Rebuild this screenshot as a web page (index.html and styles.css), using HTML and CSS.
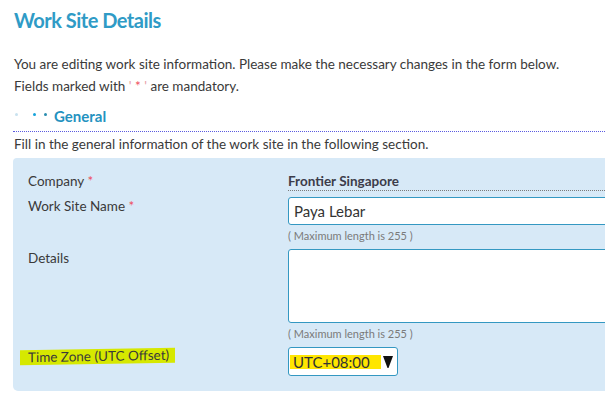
FILE: index.html
```html
<!DOCTYPE html>
<html lang="en">
<head>
  <meta charset="UTF-8">
  <title>Work Site Details</title>
  <link rel="stylesheet" href="styles.css">
</head>
<body>
  <div class="page">
    <h1>Work Site Details</h1>
    <p class="intro">You are editing work site information. Please make the necessary changes in the form below.<br>
      Fields marked with <span class="quote">'</span> <span class="req">*</span> <span class="quote">'</span> are mandatory.</p>

    <div class="section-head">
      <span class="dot dot-light"></span>
      <span class="dot dot-blue"></span>
      <span class="dot dot-dark"></span>
      <span class="section-title">General</span>
    </div>
    <p class="section-desc">Fill in the general information of the work site in the following section.</p>

    <div class="panel">
      <div class="form-grid">
        <div class="label">Company <span class="req">*</span></div>
        <div class="value">
          <div class="readonly">Frontier Singapore</div>
        </div>

        <div class="label">Work Site Name <span class="req">*</span></div>
        <div class="value">
          <input type="text" class="field" value="Paya Lebar">
          <div class="hint">( Maximum length is 255 )</div>
        </div>

        <div class="label">Details</div>
        <div class="value">
          <textarea class="field area"></textarea>
          <div class="hint">( Maximum length is 255 )</div>
        </div>

        <div class="label"><span class="marker">Time Zone (UTC Offset)</span></div>
        <div class="value">
          <div class="select-box">
            <span class="select-text">UTC+08:00</span>
            <svg class="arrow" width="10" height="12" viewBox="0 0 10 12">
              <polygon points="0,0 10,0 5.5,12 4.5,12" fill="#111"/>
            </svg>
          </div>
        </div>
      </div>
    </div>
  </div>
</body>
</html>
```

FILE: styles.css
```css
body {
  margin: 0;
  font-family: Lato, "Open Sans", sans-serif;
  color: #3a3a3a;
  background: #fff;
  overflow: hidden;
}

.page {
  width: 760px;
  padding: 4px 0 0 13px;
}

h1 {
  margin: 0 0 0 1px;
  font-size: 20px;
  font-weight: bold;
  letter-spacing: -0.5px;
  color: #2f9bc6;
  line-height: 32px;
}

.intro {
  margin: 17px 0 0 1px;
  font-size: 13.5px;
  line-height: 22px;
}

.req {
  color: #ef4a5a;
}

.quote {
  color: #e8a0a8;
}

.section-head {
  display: flex;
  align-items: center;
  height: 22px;
  margin-top: 8px;
  padding-bottom: 4px;
  border-bottom: 1px dotted #5b5be0;
}

.dot {
  width: 3px;
  height: 3px;
  border-radius: 50%;
  margin-top: -3px;
}

.dot-light {
  background: #c8e2ef;
  margin-left: 2px;
}

.dot-blue {
  background: #16a3db;
  margin-left: 15px;
}

.dot-dark {
  background: #2a8db0;
  margin-left: 8px;
}

.section-title {
  margin-left: 7px;
  font-size: 15px;
  font-weight: bold;
  color: #2492c0;
}

.section-desc {
  margin: 3px 0 0 1px;
  font-size: 13.5px;
  line-height: 18px;
}

.panel {
  margin-top: 5px;
  background: #d7e9f7;
  border-radius: 4px 0 0 5px;
  padding: 14px 0 15px 15px;
}

.form-grid {
  display: grid;
  grid-template-columns: 260px 1fr;
  row-gap: 6px;
  font-size: 13.5px;
}

.label {
  line-height: 18px;
}

.value {
  display: flex;
  flex-direction: column;
}

.readonly {
  font-weight: bold;
  color: #3c3c4a;
  line-height: 18px;
  border-bottom: 1px dotted #7a7a7a;
}

.field {
  box-sizing: border-box;
  width: 100%;
  height: 28px;
  margin: 0;
  padding: 0 5px;
  border: 1px solid #3498c2;
  border-radius: 3px;
  background: #fff;
  font-family: Lato, "Open Sans", sans-serif;
  font-size: 15px;
  color: #333;
}

.area {
  height: 74px;
  resize: none;
  display: block;
}

.hint {
  font-size: 11px;
  line-height: 12px;
  margin: 5px 0 1px;
  color: #7a7a7a;
}

.marker {
  display: inline-block;
  margin-left: -8px;
  padding: 0 6px 0 8px;
  background: #d6e800;
  transform: skewY(-1deg);
  line-height: 15px;
}

.select-box {
  box-sizing: border-box;
  width: 110px;
  height: 29px;
  display: flex;
  align-items: center;
  padding: 0 4px 0 1px;
  border: 1px solid #3498c2;
  border-radius: 3px;
  background: #fff;
}

.select-text {
  flex: 1;
  padding-left: 3px;
  background: #ffe600;
  font-size: 15px;
  line-height: 14px;
  color: #333;
}

.arrow {
  margin-left: 2px;
}
```
